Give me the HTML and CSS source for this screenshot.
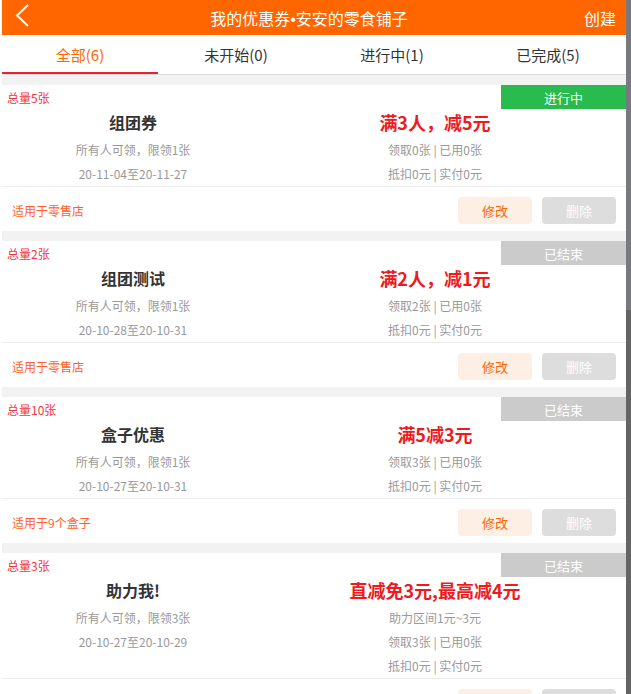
FILE: index.html
```html
<!DOCTYPE html>
<html lang="zh-CN">
<head>
<meta charset="utf-8">
<title>我的优惠券</title>
<link rel="stylesheet" href="styles.css">
</head>
<body>
<div class="page">
  <div class="main">
    <header class="topbar">
      <div class="back">
        <svg width="40" height="35" viewBox="0 0 40 35"><polyline points="26,5 15,15.5 26,26" fill="none" stroke="#fff" stroke-width="2"/></svg>
      </div>
      <div class="title">我的优惠券<span class="dot">•</span>安安的零食铺子</div>
      <div class="create">创建</div>
    </header>
    <nav class="tabs">
      <div class="tab active">全部(6)</div>
      <div class="tab">未开始(0)</div>
      <div class="tab">进行中(1)</div>
      <div class="tab">已完成(5)</div>
    </nav>
    <div class="list">
      <div class="card">
        <div class="card-head"><span class="total">总量5张</span><span class="badge badge-on">进行中</span></div>
        <div class="card-body">
          <div class="col-left">
            <div class="name">组团券</div>
            <div class="sub">所有人可领，限领1张</div>
            <div class="sub">20-11-04至20-11-27</div>
          </div>
          <div class="col-right">
            <div class="value">满3人，减5元</div>
            <div class="sub">领取0张 | 已用0张</div>
            <div class="sub">抵扣0元 | 实付0元</div>
          </div>
        </div>
        <div class="card-foot">
          <span class="scope">适用于零售店</span>
          <div class="btns"><span class="btn btn-edit">修改</span><span class="btn btn-del">删除</span></div>
        </div>
      </div>
      <div class="card">
        <div class="card-head"><span class="total">总量2张</span><span class="badge badge-end">已结束</span></div>
        <div class="card-body">
          <div class="col-left">
            <div class="name">组团测试</div>
            <div class="sub">所有人可领，限领1张</div>
            <div class="sub">20-10-28至20-10-31</div>
          </div>
          <div class="col-right">
            <div class="value">满2人，减1元</div>
            <div class="sub">领取2张 | 已用0张</div>
            <div class="sub">抵扣0元 | 实付0元</div>
          </div>
        </div>
        <div class="card-foot">
          <span class="scope">适用于零售店</span>
          <div class="btns"><span class="btn btn-edit">修改</span><span class="btn btn-del">删除</span></div>
        </div>
      </div>
      <div class="card">
        <div class="card-head"><span class="total">总量10张</span><span class="badge badge-end">已结束</span></div>
        <div class="card-body">
          <div class="col-left">
            <div class="name">盒子优惠</div>
            <div class="sub">所有人可领，限领1张</div>
            <div class="sub">20-10-27至20-10-31</div>
          </div>
          <div class="col-right">
            <div class="value">满5减3元</div>
            <div class="sub">领取3张 | 已用0张</div>
            <div class="sub">抵扣0元 | 实付0元</div>
          </div>
        </div>
        <div class="card-foot">
          <span class="scope">适用于9个盒子</span>
          <div class="btns"><span class="btn btn-edit">修改</span><span class="btn btn-del">删除</span></div>
        </div>
      </div>
      <div class="card">
        <div class="card-head"><span class="total">总量3张</span><span class="badge badge-end">已结束</span></div>
        <div class="card-body">
          <div class="col-left">
            <div class="name">助力我!</div>
            <div class="sub">所有人可领，限领3张</div>
            <div class="sub">20-10-27至20-10-29</div>
          </div>
          <div class="col-right">
            <div class="value">直减免3元,最高减4元</div>
            <div class="sub">助力区间1元~3元</div>
            <div class="sub">领取3张 | 已用0张</div>
            <div class="sub">抵扣0元 | 实付0元</div>
          </div>
        </div>
        <div class="card-foot">
          <span class="scope">适用于零售店</span>
          <div class="btns"><span class="btn btn-edit">修改</span><span class="btn btn-del">删除</span></div>
        </div>
      </div>
    </div>
  </div>
  <div class="scrollbar"><div class="thumb"></div></div>
</div>
</body>
</html>
```
FILE: styles.css
```css
* { box-sizing: border-box; }
html, body { margin: 0; padding: 0; }
body {
  background: #fff;
  font-family: "Noto Sans CJK SC", "Noto Sans", "Liberation Sans", sans-serif;
  color: #333;
}
.page {
  display: flex;
  height: 694px;
  overflow: hidden;
}
.main {
  margin-left: 2px;
  width: 624px;
  background: #f2f2f2;
  overflow: hidden;
}
.scrollbar {
  width: 5px;
  background: #646464;
}
.thumb {
  height: 310px;
  background: #78787f;
}
.topbar {
  display: grid;
  grid-template-columns: 40px 1fr 50px;
  align-items: center;
  height: 35px;
  background: #ff6600;
  color: #fff;
  font-size: 16px;
}
.back { display: flex; height: 35px; }
.back svg { display: block; }
.title { text-align: center; white-space: nowrap; }
.dot { font-family: "Liberation Sans", sans-serif; }
.create { text-align: right; padding-right: 10px; }
.tabs {
  display: grid;
  grid-template-columns: repeat(4, 1fr);
  background: #fff;
  border-bottom: 1px solid #dcdcdc;
}
.tab {
  height: 39px;
  padding-top: 2px;
  display: flex;
  align-items: center;
  justify-content: center;
  font-size: 15px;
  color: #333;
  border-bottom: 2px solid transparent;
}
.tab.active {
  color: #ff6600;
  border-bottom-color: #e8242a;
}
.list { padding-top: 10px; }
.card {
  background: #fff;
  margin-bottom: 10px;
}
.card-head {
  display: flex;
  justify-content: space-between;
  align-items: center;
  height: 24px;
}
.total {
  padding-left: 5px;
  font-size: 12px;
  color: #f5333f;
}
.badge {
  width: 125px;
  height: 24px;
  display: flex;
  align-items: center;
  justify-content: center;
  color: #fff;
  font-size: 13px;
}
.badge-on { background: #2abb4e; }
.badge-end { background: #cbcbcb; }
.card-body {
  display: flex;
  align-items: flex-start;
}
.col-left { width: 262px; text-align: center; }
.col-right { width: 342px; text-align: center; }
.name {
  font-size: 16px;
  font-weight: bold;
  color: #333;
  line-height: 26px;
  padding-bottom: 3px;
}
.value {
  font-size: 18px;
  font-weight: bold;
  color: #f0191e;
  line-height: 26px;
  padding-bottom: 3px;
}
.sub {
  font-size: 12px;
  color: #999;
  line-height: 24px;
}
.card-foot {
  display: flex;
  justify-content: space-between;
  align-items: center;
  border-top: 1px solid #ececec;
  padding: 10px 10px 7px 10px;
}
.scope {
  font-size: 12px;
  color: #ff5f2b;
}
.btns { display: flex; gap: 10px; }
.btn {
  width: 74px;
  height: 27px;
  border-radius: 4px;
  display: flex;
  align-items: center;
  justify-content: center;
  font-size: 13px;
}
.btn-edit { background: #fdefe4; color: #ff6600; }
.btn-del { background: #dddddd; color: #fff; }
```
